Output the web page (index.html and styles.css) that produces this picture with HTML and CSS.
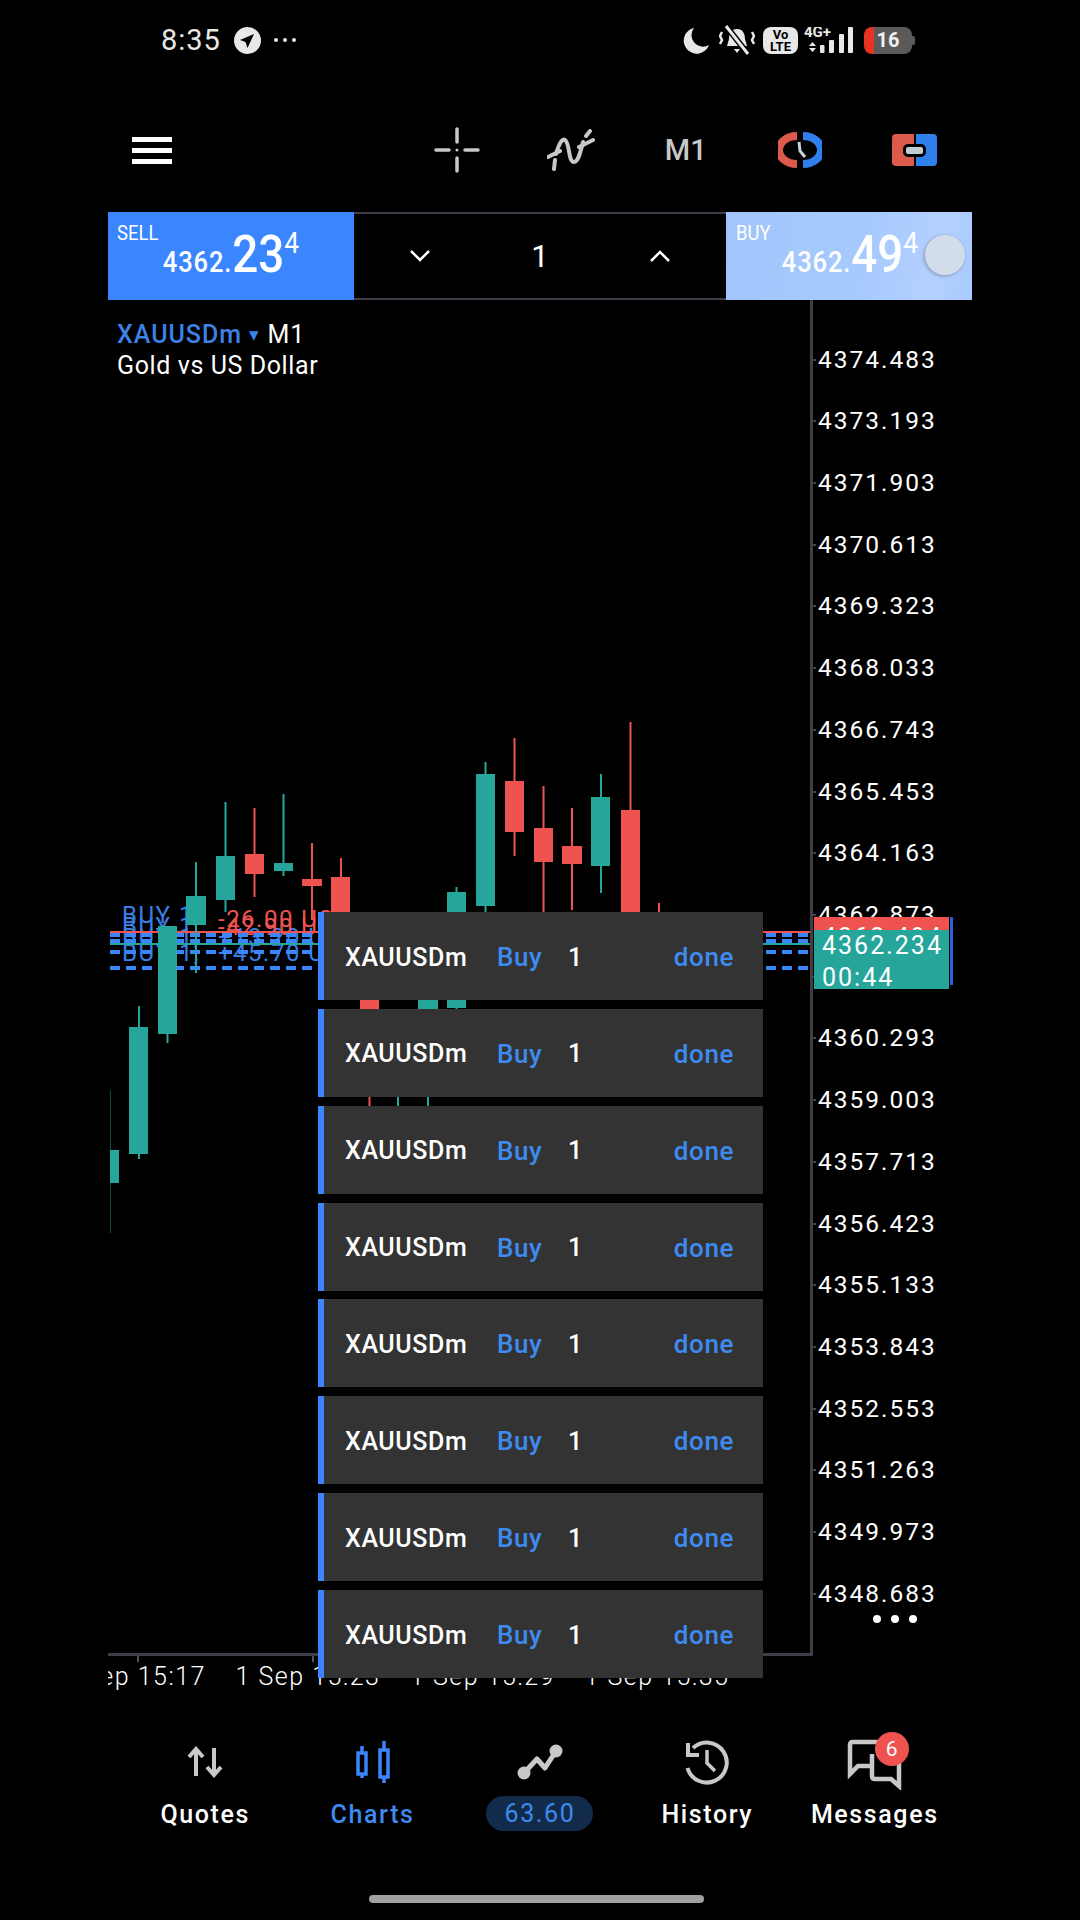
FILE: index.html
```html
<!DOCTYPE html>
<html lang="en">
<head>
  <meta charset="UTF-8">
  <title>Charts</title>
  <link rel="stylesheet" href="styles.css">
</head>
<body>
  <!-- status bar -->
  <div class="status">
    <span class="time">8:35</span>
    <svg class="tg" width="27" height="27" viewBox="0 0 27 27"><circle cx="13.5" cy="13.5" r="13.5" fill="#e8e8e8"/><path d="M20 7 L6 13 L11.5 15 L13.5 21 Z" fill="#000"/></svg>
    <span class="status-dots"><i></i><i></i><i></i></span>
    <div class="status-right">
      <svg width="27" height="27" viewBox="0 0 27 27"><path d="M11 1 A13 13 0 1 0 26 18 A11.5 11.5 0 0 1 11 1Z" fill="#e8e8e8"/></svg>
      <svg class="bell" width="36" height="31" viewBox="0 0 36 31" fill="none" stroke="#e8e8e8"><path d="M18 4 C12 4 10 9 10 14 L8 21 H28 L26 14 C26 9 24 4 18 4Z" fill="#e8e8e8" stroke="none"/><path d="M15 24 H21 L18 28Z" fill="#e8e8e8" stroke="none"/><path d="M7 1 L29 29" stroke="#000" stroke-width="6"/><path d="M7 1 L29 29" stroke-width="3"/><path d="M3 7 L1 11 L3 15 L1 19 M33 7 L35 11 L33 15 L35 19" stroke-width="2.5"/></svg>
      <span class="volte">Vo<br>LTE</span>
      <svg class="signal" width="50" height="27" viewBox="0 0 50 27"><text x="0" y="10" class="net">4G+</text><path d="M5 19 L8.500 15 L12 19Z M5 21 L8.500 25 L12 21Z" fill="#e8e8e8"/><g fill="#e8e8e8"><rect x="16" y="18" width="4.500" height="8" rx="1"/><rect x="25" y="13" width="5" height="13" rx="1"/><rect x="35" y="7" width="5" height="19" rx="1"/><rect x="44" y="0" width="5" height="26" rx="1"/></g></svg>
      <div class="battery"><span>16</span></div>
    </div>
  </div>

  <!-- toolbar -->
  <div class="toolbar">
    <div class="burger"><i></i><i></i><i></i></div>
    <div class="tools">
      <div class="tool"><svg width="46" height="46" viewBox="0 0 46 46" stroke="#c8c8c8" stroke-width="3.500" stroke-linecap="round"><path d="M23 2 V15 M23 31 V44 M2 23 H15 M31 23 H44"/><circle cx="23" cy="23" r="1.500" fill="#c8c8c8" stroke="none"/></svg></div>
      <div class="tool"><svg width="48" height="42" viewBox="0 0 48 42" fill="none" stroke="#c8c8c8" stroke-width="4" stroke-linecap="round"><path d="M1 28 L13 22 M7 40 L8 31 M32 18 L46 11 M39 7 L43 2"/><path d="M9 25 C12 15 15 9 18 11 C23 14 21 33 27 33 C31 33 33 25 36 13"/></svg></div>
      <div class="tool tool-text">M1</div>
      <div class="tool"><svg width="44" height="36" viewBox="0 0 44 36" fill="none" stroke-width="8"><path d="M19 4 A18 14 0 0 0 19 32" stroke="#dc5a4c"/><path d="M25 4 A18 14 0 0 1 25 32" stroke="#2f80ed"/><path d="M21 10 L22 19 L27 25" stroke="#c8d0d8" stroke-width="3"/></svg></div>
      <div class="tool"><div class="switch"><i></i></div></div>
    </div>
  </div>

  <!-- one click trading -->
  <div class="trade">
    <div class="quote sell">
      <div class="quote-inner">
        <div class="quote-name">SELL</div>
        <div class="quote-price">4362.<b>23</b><sup>4</sup></div>
      </div>
    </div>
    <div class="volume">
      <svg width="20" height="12" viewBox="0 0 20 12" fill="none" stroke="#fff" stroke-width="2.500"><path d="M1 1 L10 10 L19 1"/></svg>
      <span>1</span>
      <svg width="20" height="12" viewBox="0 0 20 12" fill="none" stroke="#fff" stroke-width="2.500"><path d="M1 11 L10 2 L19 11"/></svg>
    </div>
    <div class="quote buy">
      <div class="quote-inner">
        <div class="quote-name">BUY</div>
        <div class="quote-price">4362.<b>49</b><sup>4</sup></div>
      </div>
      <div class="ripple"></div>
    </div>
  </div>

  <!-- chart -->
  <div class="chart-area">
    <div class="plot">
      <svg class="candles" width="702" height="1353" viewBox="108 300 702 1353">
        <g class="order-text">
          <text x="122" y="923">BUY 1,</text>
          <text x="122" y="934">BUY 1,</text>
          <text x="122" y="945">BUY 1,</text>
          <text x="122" y="961">BUY 1,</text>
          <text x="218" y="945">+13.20 USD</text>
          <text x="218" y="961">+45.70 USD</text>
          <text class="loss" x="218" y="927">-26.00 USD</text>
          <text class="loss" x="218" y="935">-42.90 USD</text>
        </g>
        <g class="order-lines">
          <path d="M110 935 H810 M110 941 H810 M110 952 H810 M110 968 H810"/>
        </g>
        <path class="line-ask" d="M110 932 H810"/>
        <path class="line-bid" d="M110 944 H810"/>

        <path class="wick-dim" d="M110.500 1090 V1233"/>
        <g class="up">
          <path d="M139 1006 V1159 M167.500 926 V1043 M196 862 V973 M225.500 802 V912 M283.500 794 V876 M398 1097 V1106 M428 1097 V1106 M456.500 887 V1012 M485.500 762 V912 M601 774 V893"/>
          <rect x="110" y="1150" width="9" height="33"/>
          <rect x="129" y="1027" width="19" height="127"/>
          <rect x="158" y="926" width="19" height="108"/>
          <rect x="186" y="896" width="20" height="29"/>
          <rect x="216" y="856" width="19" height="44"/>
          <rect x="274" y="863" width="19" height="8"/>
          <rect x="418" y="990" width="20" height="19"/>
          <rect x="447" y="892" width="19" height="116"/>
          <rect x="476" y="774" width="19" height="132"/>
          <rect x="591" y="797" width="19" height="69"/>
        </g>
        <g class="down">
          <path d="M254.500 808 V897 M312 843 V920 M341 858 V900 M369.500 990 V1106 M514.500 738 V856 M543.500 786 V912 M572 808 V910 M630.500 722 V912 M659 903 V912"/>
          <rect x="245" y="854" width="19" height="20"/>
          <rect x="302" y="879" width="20" height="7"/>
          <rect x="331" y="877" width="19" height="40"/>
          <rect x="360" y="990" width="19" height="19"/>
          <rect x="505" y="781" width="19" height="51"/>
          <rect x="534" y="828" width="19" height="34"/>
          <rect x="562" y="846" width="20" height="18"/>
          <rect x="621" y="810" width="19" height="102"/>
        </g>
      </svg>
    </div>

    <div class="axis">
      <div class="tick">4374.483</div>
      <div class="tick">4373.193</div>
      <div class="tick">4371.903</div>
      <div class="tick">4370.613</div>
      <div class="tick">4369.323</div>
      <div class="tick">4368.033</div>
      <div class="tick">4366.743</div>
      <div class="tick">4365.453</div>
      <div class="tick">4364.163</div>
      <div class="tick">4362.873</div>
      <div class="tick">4361.583</div>
      <div class="tick">4360.293</div>
      <div class="tick">4359.003</div>
      <div class="tick">4357.713</div>
      <div class="tick">4356.423</div>
      <div class="tick">4355.133</div>
      <div class="tick">4353.843</div>
      <div class="tick">4352.553</div>
      <div class="tick">4351.263</div>
      <div class="tick">4349.973</div>
      <div class="tick">4348.683</div>
    </div>

    <div class="symbol">
      <div><span class="symbol-name">XAUUSDm</span> <span class="symbol-arrow">▾</span> M1</div>
      <div class="symbol-desc">Gold vs US Dollar</div>
    </div>

    <div class="tag tag-ask">4362.494</div>
    <div class="tag tag-bid">4362.234<br>00:44</div>
    <div class="tag-edge"></div>
    <div class="more"><i></i><i></i><i></i></div>

    <div class="toasts">
      <div class="toast"><span class="toast-sym">XAUUSDm</span><span class="toast-side">Buy</span><span>1</span><span class="toast-done">done</span></div>
      <div class="toast"><span class="toast-sym">XAUUSDm</span><span class="toast-side">Buy</span><span>1</span><span class="toast-done">done</span></div>
      <div class="toast"><span class="toast-sym">XAUUSDm</span><span class="toast-side">Buy</span><span>1</span><span class="toast-done">done</span></div>
      <div class="toast"><span class="toast-sym">XAUUSDm</span><span class="toast-side">Buy</span><span>1</span><span class="toast-done">done</span></div>
      <div class="toast"><span class="toast-sym">XAUUSDm</span><span class="toast-side">Buy</span><span>1</span><span class="toast-done">done</span></div>
      <div class="toast"><span class="toast-sym">XAUUSDm</span><span class="toast-side">Buy</span><span>1</span><span class="toast-done">done</span></div>
      <div class="toast"><span class="toast-sym">XAUUSDm</span><span class="toast-side">Buy</span><span>1</span><span class="toast-done">done</span></div>
      <div class="toast"><span class="toast-sym">XAUUSDm</span><span class="toast-side">Buy</span><span>1</span><span class="toast-done">done</span></div>
    </div>
  </div>

  <!-- time axis -->
  <div class="times">
    <div class="time-label">1 Sep 15:17</div>
    <div class="time-label">1 Sep 15:23</div>
    <div class="time-label">1 Sep 15:29</div>
    <div class="time-label">1 Sep 15:35</div>
  </div>

  <!-- bottom tabs -->
  <div class="tabs">
    <div class="tab">
      <div class="tab-icon"><svg width="36" height="32" viewBox="0 0 36 32" fill="none" stroke="#c8c8c8" stroke-width="4"><path d="M9 30 V3 M2 11 L9 3 L16 11"/><path d="M27 2 V29 M20 21 L27 29 L34 21"/></svg></div>
      <div class="tab-label">Quotes</div>
    </div>
    <div class="tab active">
      <div class="tab-icon"><svg width="36" height="44" viewBox="0 0 36 44" fill="none" stroke="#3a86ff" stroke-width="3.500"><path d="M7 6 V13 M7 34 V38 M29 1 V9 M29 37 V43"/><rect x="3" y="13" width="8" height="21"/><rect x="25" y="10" width="8" height="27"/></svg></div>
      <div class="tab-label">Charts</div>
    </div>
    <div class="tab">
      <div class="tab-icon"><svg width="48" height="38" viewBox="0 0 48 38" fill="none" stroke="#c8c8c8" stroke-width="5" stroke-linejoin="round"><path d="M8 30 L21 16 L29 25 L40 8"/><circle cx="8" cy="30" r="6.500" fill="#c8c8c8" stroke="none"/><circle cx="40" cy="8" r="6.500" fill="#c8c8c8" stroke="none"/></svg></div>
      <div class="tab-pill">63.60</div>
    </div>
    <div class="tab">
      <div class="tab-icon"><svg width="48" height="48" viewBox="0 0 48 48" fill="none" stroke="#c8c8c8" stroke-width="4"><path d="M4.500 30 A20 20 0 1 0 10 10"/><path d="M5 5 V17 H16"/><path d="M24 12 V25 L32 33" stroke-width="3.500"/></svg></div>
      <div class="tab-label">History</div>
    </div>
    <div class="tab">
      <div class="tab-icon msg">
        <svg width="58" height="52" viewBox="0 0 58 52" fill="none" stroke="#c8c8c8" stroke-width="4.500"><path d="M32 4 H7 Q4 4 4 7 V36 L12 28 H24"/><path d="M26 16 V38 Q26 41 29 41 H45 L53 48 V18"/></svg>
        <span class="badge">6</span>
      </div>
      <div class="tab-label">Messages</div>
    </div>
  </div>

  <div class="home-bar"></div>
</body>
</html>
```

FILE: styles.css
```css
html, body {
  margin: 0;
  padding: 0;
}
body {
  width: 1080px;
  height: 1920px;
  overflow: hidden;
  background: #000;
  color: #fff;
  font-family: Roboto, "Noto Sans", sans-serif;
}

/* status bar */
.status {
  height: 80px;
  display: flex;
  align-items: center;
  padding: 0 166px 0 161px;
  color: #e8e8e8;
}
.time {
  font-size: 29px;
  letter-spacing: 1px;
}
.tg {
  margin-left: 13px;
}
.status-dots {
  display: flex;
  gap: 5px;
  margin-left: 13px;
}
.status-dots i {
  width: 4px;
  height: 4px;
  border-radius: 50%;
  background: #e8e8e8;
}
.status-right {
  margin-left: auto;
  display: flex;
  align-items: center;
}
.bell {
  margin-left: 9px;
}
.volte {
  width: 35px;
  height: 27px;
  margin-left: 8px;
  background: #e8e8e8;
  border-radius: 8px;
  color: #000;
  font-size: 13px;
  font-weight: 700;
  line-height: 12px;
  text-align: center;
  padding-top: 2px;
  box-sizing: border-box;
}
.signal {
  margin-left: 6px;
}
.net {
  fill: #e8e8e8;
  font-size: 15px;
  font-weight: 700;
}
.battery {
  position: relative;
  width: 48px;
  height: 27px;
  margin: 0 2px 0 10px;
  background: linear-gradient(90deg, #ea3323 10px, #5a5a5a 10px);
  border-radius: 8px;
  text-align: center;
  font-size: 20px;
  font-weight: 700;
  line-height: 27px;
  color: #f0f0f0;
}
.battery::after {
  content: "";
  position: absolute;
  right: -3px;
  top: 9px;
  width: 3px;
  height: 9px;
  background: #5a5a5a;
  border-radius: 0 2px 2px 0;
}

/* toolbar */
.toolbar {
  height: 132px;
  box-sizing: border-box;
  padding: 8px 108px 0 132px;
  display: flex;
  align-items: center;
  justify-content: space-between;
}
.burger {
  width: 40px;
  display: flex;
  flex-direction: column;
  gap: 6px;
}
.burger i {
  height: 5px;
  background: #fff;
}
.tools {
  display: flex;
}
.tool {
  width: 114.500px;
  display: flex;
  justify-content: center;
  align-items: center;
}
.tool-text {
  color: #c8c8c8;
  font-size: 29px;
  font-weight: 500;
}
.switch {
  position: relative;
  width: 45px;
  height: 32px;
  border-radius: 4px;
  background: linear-gradient(90deg, #dc5a4c 22px, #000 22px, #000 24px, #2f80ed 24px);
}
.switch i {
  position: absolute;
  left: 11px;
  top: 10px;
  width: 23px;
  height: 13px;
  box-sizing: border-box;
  border: 3px solid #000;
  border-radius: 5px;
  background: #c3ccd4;
}

/* sell / volume / buy */
.trade {
  margin: 0 108px;
  height: 88px;
  display: flex;
}
.quote {
  position: relative;
  width: 246px;
  box-sizing: border-box;
  padding: 9px 0 0 9px;
}
.sell {
  background: #3a86ff;
}
.buy {
  background: linear-gradient(100deg, #a2c5fb, #a6c9fe 55%, #b4d1ff 85%, #a8caff);
  padding-left: 10px;
}
.quote-inner {
  transform: scaleX(.88);
  transform-origin: left top;
}
.quote-name {
  font-size: 21px;
  line-height: 24px;
}
.quote-price {
  margin: -17px 0 0 52px;
  font-size: 29px;
  font-weight: 500;
  letter-spacing: 1px;
  line-height: 54px;
  white-space: nowrap;
}
.quote-price b {
  font-size: 52px;
  font-weight: 500;
  letter-spacing: 0;
}
.quote-price sup {
  font-size: 30px;
  font-weight: 400;
  line-height: 0;
  vertical-align: 19px;
}
.ripple {
  position: absolute;
  right: 7px;
  top: 23px;
  width: 40px;
  height: 40px;
  border-radius: 50%;
  background: #d3dcea;
  box-shadow: -1px 1px 3px 1px #94a8c8;
}
.volume {
  flex: 1;
  box-sizing: border-box;
  border-top: 2px solid #3c3d47;
  border-bottom: 2px solid #3c3d47;
  padding: 0 56px;
  display: flex;
  align-items: center;
  justify-content: space-between;
  font-size: 31px;
}

/* chart */
.chart-area {
  position: relative;
  margin-left: 108px;
  width: 864px;
  height: 1356px;
  display: grid;
  grid-template-columns: 705px 159px;
}
.plot {
  box-sizing: border-box;
  height: 1356px;
  border-right: 3px solid #3e3f49;
  border-bottom: 3px solid #3e3f49;
}
.candles {
  display: block;
}
.order-text text {
  fill: #3a7fe6;
  font-size: 24px;
  letter-spacing: 1.500px;
}
.order-text .loss {
  fill: #ef5350;
}
.order-lines path {
  fill: none;
  stroke: #3a86ff;
  stroke-width: 4;
  stroke-dasharray: 10 6;
}
.line-ask {
  fill: none;
  stroke: #ef5350;
  stroke-width: 2;
}
.line-bid {
  fill: none;
  stroke: #26a69a;
  stroke-width: 2;
}
.wick-dim {
  fill: none;
  stroke: #0e4a44;
  stroke-width: 1;
}
.up {
  fill: #26a69a;
  stroke: none;
}
.up path {
  fill: none;
  stroke: #26a69a;
  stroke-width: 2;
}
.down {
  fill: #ef5350;
}
.down path {
  fill: none;
  stroke: #ef5350;
  stroke-width: 2;
}

.axis {
  padding-top: 28.500px;
}
.tick {
  position: relative;
  height: 61.720px;
  box-sizing: border-box;
  padding-left: 5px;
  font-size: 24.500px;
  letter-spacing: 2px;
  line-height: 61.720px;
}
.tick::before {
  content: "";
  position: absolute;
  left: 0;
  top: 30px;
  width: 3px;
  height: 2px;
  background: #444;
}

.symbol {
  position: absolute;
  left: 9px;
  top: 19px;
  font-size: 25px;
  line-height: 31px;
  letter-spacing: 1px;
}
.symbol-name {
  color: #3c82e6;
  font-weight: 500;
}
.symbol-arrow {
  color: #3c82e6;
  font-size: 19px;
  vertical-align: 2px;
}
.symbol-desc {
  letter-spacing: .6px;
}

.tag {
  position: absolute;
  left: 706px;
  width: 135px;
  box-sizing: border-box;
  padding-left: 8px;
  font-size: 25px;
  letter-spacing: 2px;
  overflow: hidden;
}
.tag-ask {
  top: 617px;
  height: 16px;
  background: #ef5350;
  line-height: 42px;
}
.tag-bid {
  top: 630px;
  height: 59px;
  background: #26a69a;
  line-height: 32px;
}
.tag-edge {
  position: absolute;
  left: 842px;
  top: 617px;
  width: 3px;
  height: 68px;
  background: #2a5fe0;
}
.more {
  position: absolute;
  left: 765px;
  top: 1315px;
  display: flex;
  gap: 10px;
}
.more i {
  width: 8px;
  height: 8px;
  border-radius: 50%;
  background: #fff;
}

.toasts {
  position: absolute;
  z-index: 2;
  left: 210px;
  top: 612px;
  width: 445px;
  display: flex;
  flex-direction: column;
  gap: 8.860px;
}
.toast {
  height: 88px;
  box-sizing: border-box;
  background: #333;
  border-left: 6px solid #3a86ff;
  padding: 2px 29px 0 21px;
  display: flex;
  align-items: center;
  font-size: 25px;
  font-weight: 500;
  letter-spacing: .6px;
}
.toast-sym {
  width: 152px;
}
.toast-side {
  width: 71px;
  color: #3d8bf0;
  font-size: 26px;
}
.toast-done {
  margin-left: auto;
  color: #3d8bf0;
  font-size: 26px;
}

/* time axis */
.times {
  margin-left: 108px;
  width: 704px;
  height: 79px;
  overflow: hidden;
  display: flex;
  font-size: 25px;
  font-weight: 300;
  letter-spacing: 1.500px;
}
.time-label {
  position: relative;
  flex: none;
  width: 174.500px;
  padding-top: 5px;
  line-height: 32px;
  white-space: nowrap;
  box-sizing: border-box;
}
.time-label:first-child {
  margin-left: -47px;
}
.time-label::before {
  content: "";
  position: absolute;
  left: 76px;
  top: 0;
  width: 2px;
  height: 6px;
  background: #555;
}

/* tabs */
.tabs {
  margin-left: 121.500px;
  display: grid;
  grid-template-columns: repeat(5, 167.400px);
}
.tab {
  display: flex;
  flex-direction: column;
  align-items: center;
}
.tab-icon {
  position: relative;
  height: 54px;
  display: flex;
  align-items: center;
  justify-content: center;
  margin-bottom: 7px;
}
.msg svg {
  margin-top: 4px;
}
.tab-label {
  font-size: 25px;
  font-weight: 500;
  letter-spacing: 1.600px;
  line-height: 38px;
}
.active .tab-label {
  color: #3d8bf0;
}
.tab-pill {
  width: 107px;
  height: 35px;
  border-radius: 18px;
  background: #132b4a;
  color: #3d8bf0;
  font-size: 25px;
  letter-spacing: 1.600px;
  line-height: 35px;
  text-align: center;
}
.badge {
  position: absolute;
  left: 29px;
  top: -3px;
  width: 34px;
  height: 34px;
  border-radius: 50%;
  background: #ef5350;
  font-size: 21px;
  line-height: 34px;
  text-align: center;
}

.home-bar {
  width: 335px;
  height: 8px;
  margin: 61px 0 0 369px;
  border-radius: 4px;
  background: #a0a0a0;
}
```
